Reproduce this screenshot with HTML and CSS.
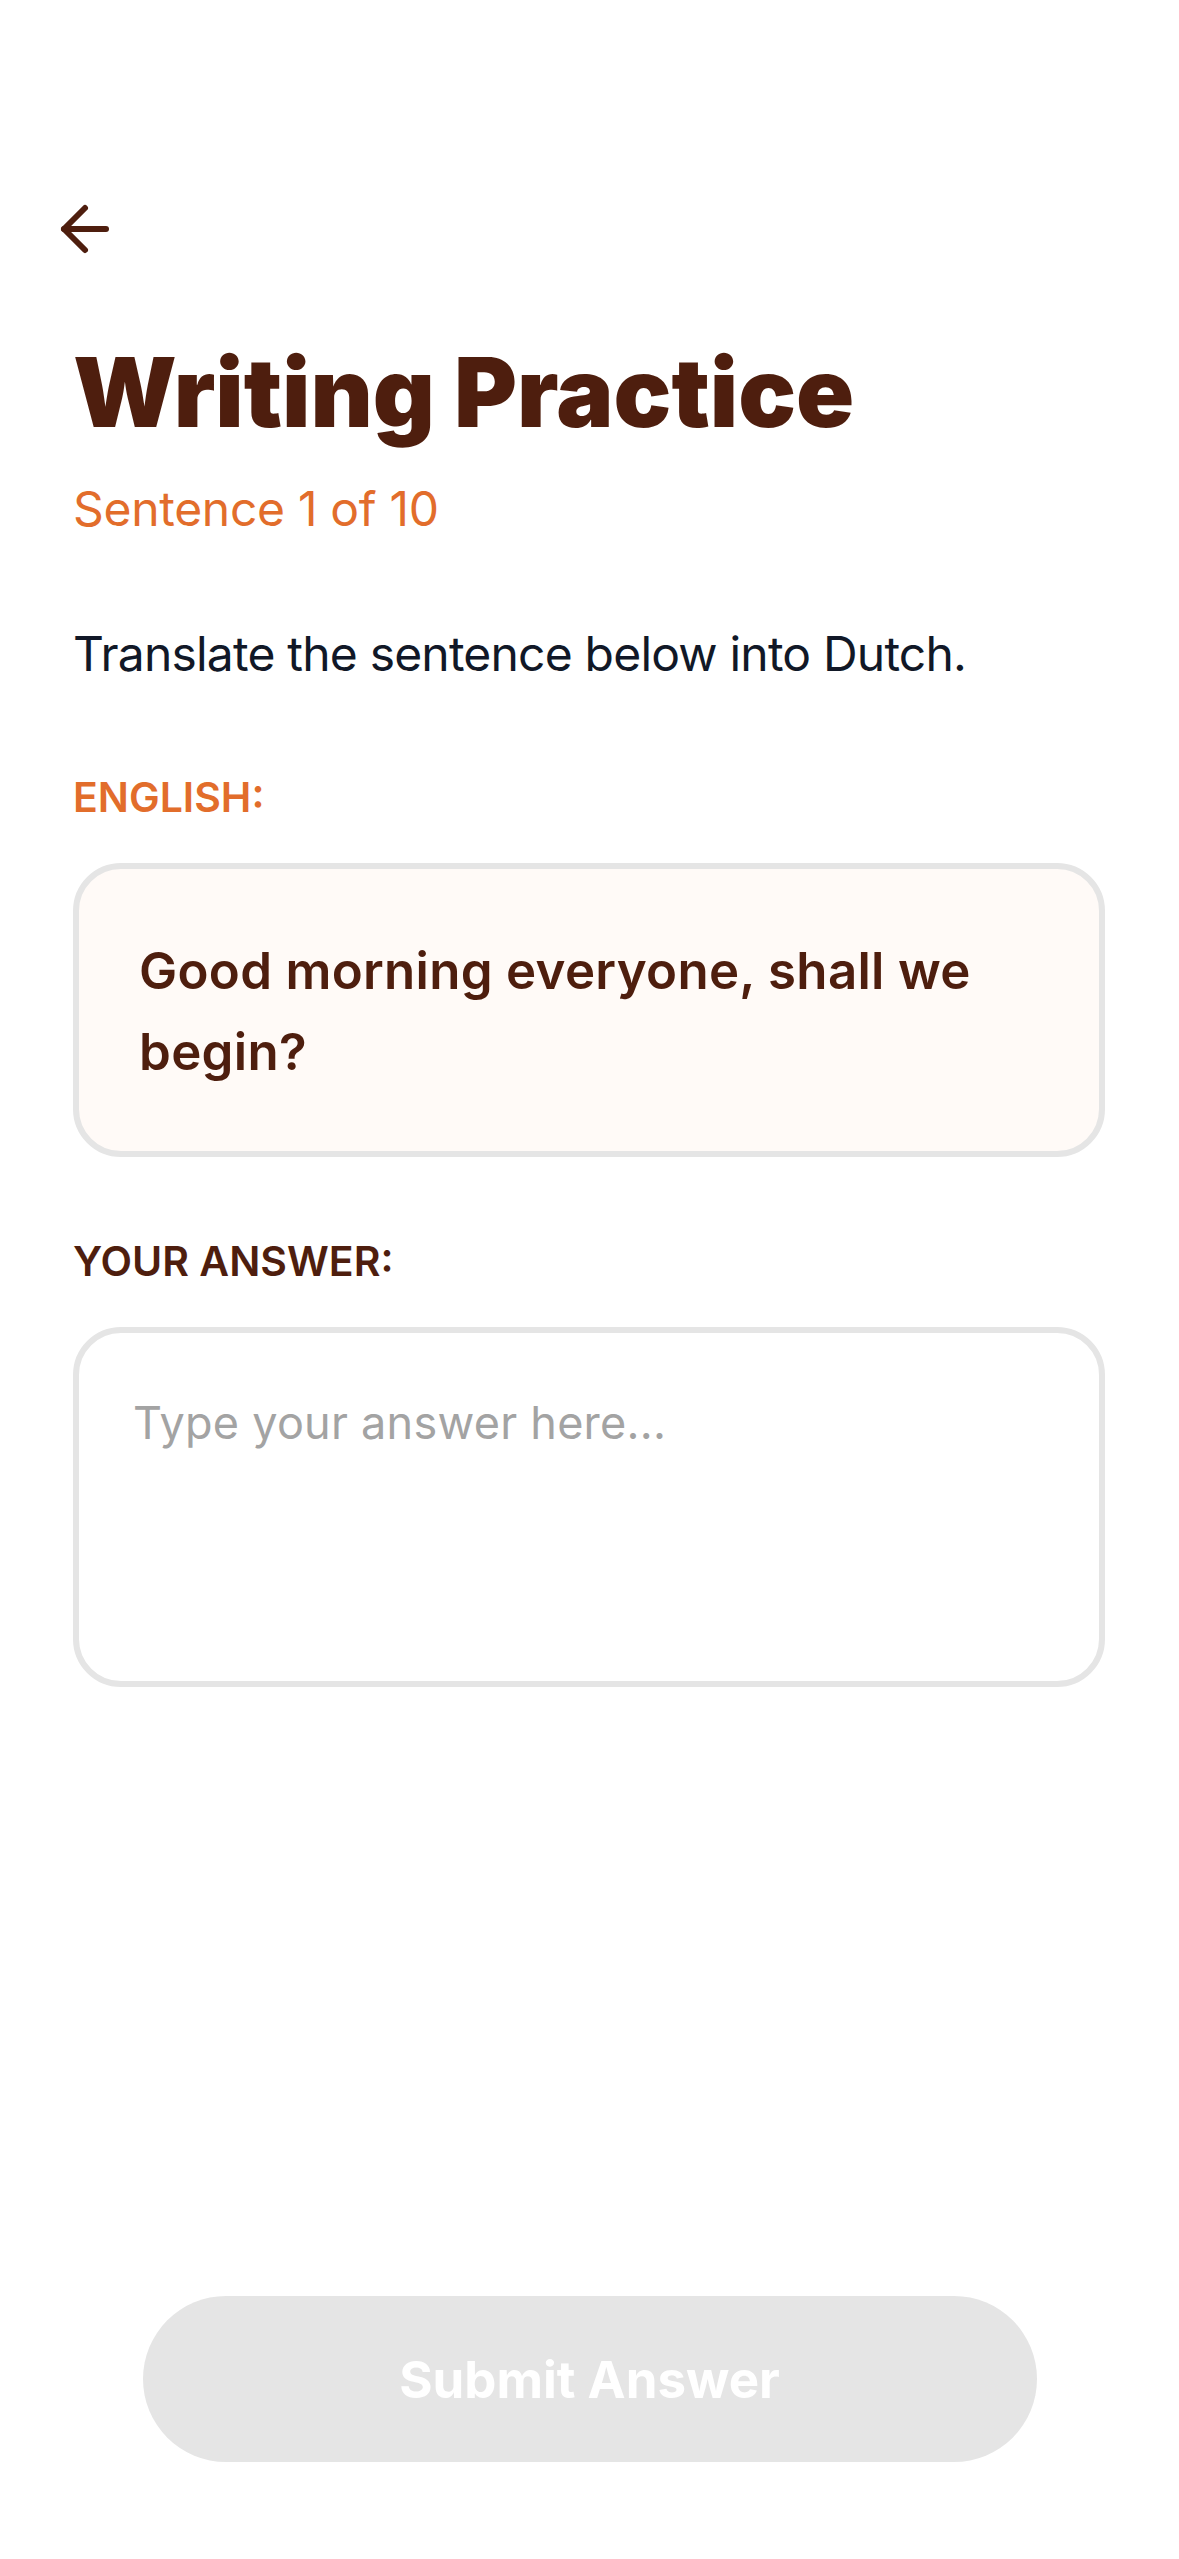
FILE: index.html
```html
<!DOCTYPE html>
<html lang="en">
<head>
<meta charset="utf-8">
<title>Writing Practice</title>
<link rel="stylesheet" href="styles.css">
</head>
<body>
<div class="screen">
  <main class="content">
    <button class="back" aria-label="Back">
      <svg viewBox="0 0 24 24" width="72" height="72" fill="none" stroke="currentColor" stroke-width="2" stroke-linecap="round" stroke-linejoin="round">
        <line x1="19" y1="12" x2="5" y2="12"/>
        <polyline points="12 19 5 12 12 5"/>
      </svg>
    </button>
    <h1 class="title">Writing Practice</h1>
    <p class="progress">Sentence 1 of 10</p>
    <p class="instruction">Translate the sentence below into Dutch.</p>
    <div class="label label-source">ENGLISH:</div>
    <div class="source-card">Good morning everyone, shall we begin?</div>
    <div class="label label-answer">YOUR ANSWER:</div>
    <textarea class="answer" placeholder="Type your answer here..."></textarea>
  </main>
  <footer class="footer">
    <button class="submit" disabled>Submit Answer</button>
  </footer>
</div>
</body>
</html>
```

FILE: styles.css
```css
* { box-sizing: border-box; }

html, body {
  margin: 0;
  padding: 0;
  background: #ffffff;
}

body {
  font-family: Inter, "Noto Sans", "Liberation Sans", sans-serif;
}

.screen {
  min-height: 100vh;
  display: flex;
  flex-direction: column;
}

.content {
  padding: 193px 74px 0 73px;
  display: flex;
  flex-direction: column;
}

.back {
  width: 72px;
  height: 72px;
  margin: 0 0 0 -24px;
  padding: 0;
  border: 0;
  background: transparent;
  color: #4e1e0e;
  display: block;
}

.back svg { display: block; }

.title {
  margin: 70px 0 0;
  font-size: 96px;
  line-height: 115px;
  font-weight: 900;
  color: #4e1e0e;
  letter-spacing: 0;
}

.progress {
  margin: 23px 0 0;
  font-size: 48px;
  line-height: 72px;
  color: #e26d2b;
  letter-spacing: -0.3px;
}

.instruction {
  margin: 73px 0 0;
  font-size: 48px;
  line-height: 72px;
  color: #111827;
  letter-spacing: -0.8px;
}

.label {
  font-size: 41px;
  line-height: 60px;
  font-weight: 600;
}

.label-source {
  margin-top: 77px;
  color: #e26d2b;
}

.label-answer {
  margin-top: 74px;
  color: #4e1e0e;
}

.source-card {
  margin-top: 36px;
  border: 6px solid #e5e5e5;
  border-radius: 48px;
  background: #fffaf7;
  padding: 61px 60px 59px;
  font-size: 51px;
  line-height: 81px;
  font-weight: 600;
  color: #4e1e0e;
  letter-spacing: 0.3px;
}

.answer {
  margin-top: 36px;
  display: block;
  width: 100%;
  height: 360px;
  border: 6px solid #e5e5e5;
  border-radius: 48px;
  background: #ffffff;
  padding: 54px 54px;
  font-family: inherit;
  font-size: 45px;
  line-height: 72px;
  letter-spacing: 0.25px;
  color: #111827;
  resize: none;
  outline: none;
}

.answer::placeholder {
  color: #a3a3a3;
}

.footer {
  margin-top: auto;
  padding: 0 0 97px;
  display: flex;
  justify-content: center;
}

.submit {
  width: 894px;
  height: 166px;
  border: 0;
  border-radius: 83px;
  background: #e5e5e5;
  color: #ffffff;
  font-family: inherit;
  font-size: 51px;
  font-weight: 700;
}
```
